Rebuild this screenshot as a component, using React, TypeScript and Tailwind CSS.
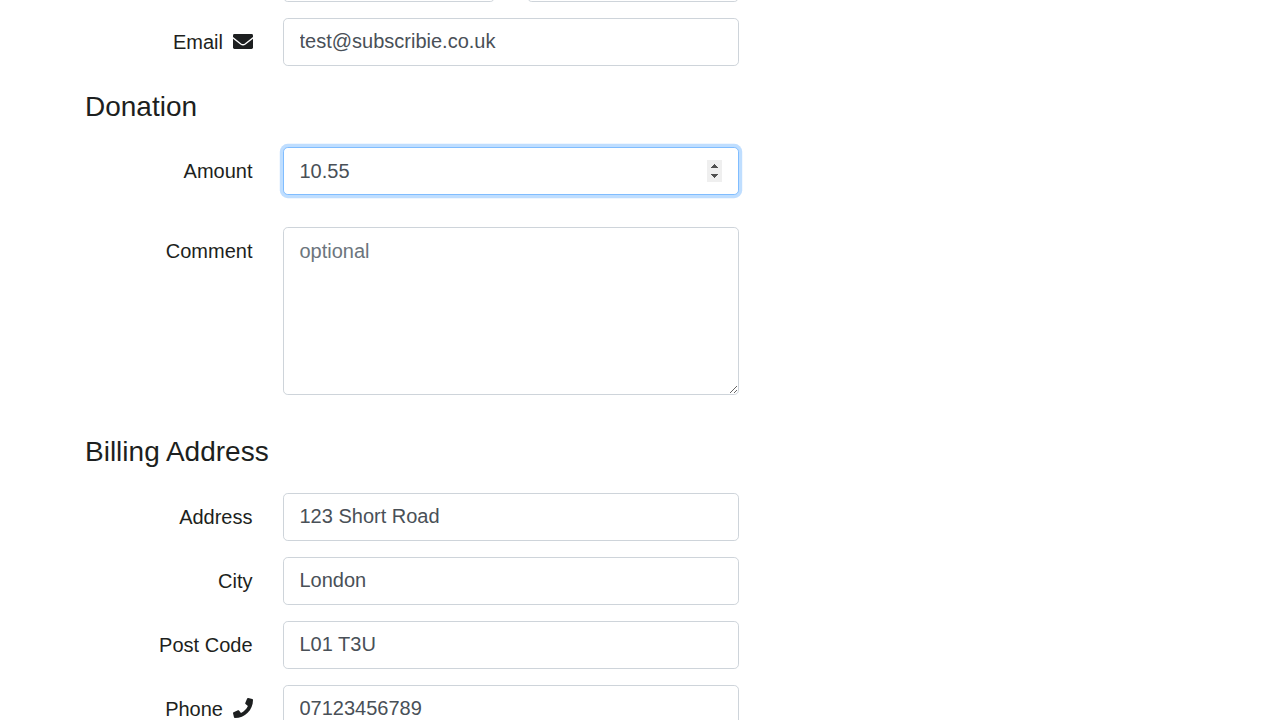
import type { ReactNode } from "react";
import { FaPhone } from "react-icons/fa";

const field =
  "block w-[456px] rounded-[4.8px] border border-[#ced4da] bg-white px-[15.5px] text-xl leading-[30px] text-[#495057] outline-none placeholder:text-[#6c757d]";
const textField = `${field} h-12 pt-[7px] pb-[9px]`;

function EnvelopeIcon() {
  return (
    <svg className="mb-[1px] h-[15px] w-5" viewBox="0 0 20 15" aria-hidden="true">
      <rect width="20" height="15" rx="1.4" fill="currentColor" />
      <path d="M-.5 3.6 7.8 10Q10 11.6 12.2 10L20.5 3.6" fill="none" stroke="#fff" strokeWidth="1.4" />
    </svg>
  );
}

function Row({ label, icon, className = "mb-4", children }: { label: string; icon?: ReactNode; className?: string; children: ReactNode }) {
  return (
    <div className={`flex items-start ${className}`}>
      <div className="mr-[30px] flex w-[168px] items-center justify-end gap-[10px] pt-[9px] text-xl leading-[30px]">
        <label className={icon ? "" : "pr-[0.5px]"}>{label}</label>
        {icon}
      </div>
      {children}
    </div>
  );
}

export default function App() {
  return (
    <main className="h-[720px] w-[1280px] overflow-hidden bg-white pl-[85px] font-['Liberation_Sans',sans-serif] text-[#1d1f20]">
      <div className="mb-4 ml-[198px] flex h-[2px] items-end gap-8 overflow-hidden">
        <div className="h-12 w-[212px] shrink-0 rounded-[4.8px] border border-[#ced4da]" />
        <div className="h-12 w-[212px] shrink-0 rounded-[4.8px] border border-[#ced4da]" />
      </div>
      <Row label="Email" icon={<EnvelopeIcon />} className="mb-6">
        <input className={textField} defaultValue="test@subscribie.co.uk" />
      </Row>
      <h3 className="mb-[23px] text-[28px] leading-[34px]">Donation</h3>
      <Row label="Amount" className="mb-8">
        <div className="relative">
          <input
            type="number"
            step="0.01"
            autoFocus
            className={`${field} h-12 py-2 [appearance:textfield] focus:border-[#80bdff] focus:shadow-[0_0_0_3.2px_rgba(0,123,255,0.25)] [&::-webkit-inner-spin-button]:appearance-none`}
            defaultValue="10.55"
          />
          <svg className="pointer-events-none absolute top-[13px] right-[17px] h-[22px] w-[15px]" viewBox="0 0 15 22" aria-hidden="true">
            <path fill="#efefef" d="M0 0h15v22H0z" />
            <path fill="#505050" d="M7 4h1v1h1v1h1v1h1v1H4V7h1V6h1V5h1zM4 14h7v1h-1v1H9v1H8v1H7v-1H6v-1H5v-1H4z" />
          </svg>
        </div>
      </Row>
      <Row label="Comment" className="mb-10">
        <textarea className={`${field} h-[168px] resize-y py-2`} placeholder="optional" />
      </Row>
      <h3 className="mb-6 text-[28px] leading-[34px]">Billing Address</h3>
      <Row label="Address">
        <input className={textField} defaultValue="123 Short Road" />
      </Row>
      <Row label="City">
        <input className={textField} defaultValue="London" />
      </Row>
      <Row label="Post Code">
        <input className={textField} defaultValue="L01 T3U" />
      </Row>
      <Row label="Phone" icon={<FaPhone className="mb-[2px] size-5" />}>
        <input className={textField} defaultValue="07123456789" />
      </Row>
    </main>
  );
}
